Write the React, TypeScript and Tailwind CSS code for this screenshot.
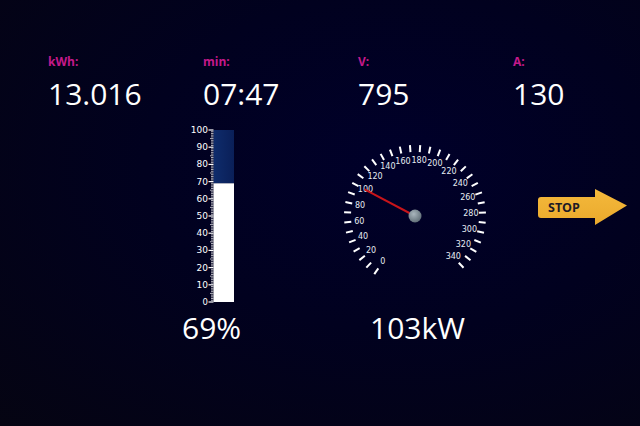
import React from "react";

const stats = [
  { label: "kWh:", value: "13.016" },
  { label: "min:", value: "07:47" },
  { label: "V:", value: "795" },
  { label: "A:", value: "130" },
];

function LevelBar({ percent }: { percent: number }) {
  const top = 10;
  const bottom = 182;
  const y = (v: number) => bottom - ((bottom - top) * v) / 100;
  const ticks = [];
  for (let v = 0; v <= 100; v++) {
    const major = v % 10 === 0;
    const mid = v % 5 === 0;
    ticks.push(
      <line
        key={v}
        x1={major ? 28.5 : mid ? 30 : 31}
        x2={33.5}
        y1={y(v)}
        y2={y(v)}
        stroke="#ffffff"
        strokeWidth={major ? 1.2 : 0.7}
      />
    );
    if (major) {
      ticks.push(
        <text
          key={"l" + v}
          x={28}
          y={y(v)}
          textAnchor="end"
          dominantBaseline="central"
          fill="#ffffff"
          fontSize={v === 0 ? "8.5" : "9"}
          fontFamily="DejaVu Sans, sans-serif"
        >
          {v}
        </text>
      );
    }
  }
  return (
    <svg width="60" height="188" viewBox="0 0 60 188" className="ml-[180px] shrink-0">
      <defs>
        <linearGradient id="barTop" x1="0" y1="0" x2="1" y2="0">
          <stop offset="0" stopColor="#0f2c6c" />
          <stop offset="1" stopColor="#0a1f58" />
        </linearGradient>
      </defs>
      <rect x="33.5" y={top} width="20.5" height={y(percent) - top} fill="url(#barTop)" />
      <rect x="33.5" y={y(percent)} width="20.5" height={bottom - y(percent)} fill="#ffffff" />
      {ticks}
    </svg>
  );
}

function Speedometer({ value }: { value: number }) {
  const cx = 75;
  const cy = 75;
  const ang = (v: number) => ((235 - v * 0.829) * Math.PI) / 180;
  const items = [];
  for (let v = 0; v <= 340; v += 10) {
    const a = ang(v);
    items.push(
      <line
        key={v}
        x1={cx + 64 * Math.cos(a)}
        y1={cy - 64 * Math.sin(a)}
        x2={cx + 71 * Math.cos(a)}
        y2={cy - 71 * Math.sin(a)}
        stroke="#ffffff"
        strokeWidth="2"
      />
    );
    if (v % 20 === 0) {
      items.push(
        <text
          key={"t" + v}
          x={cx + 56 * Math.cos(a)}
          y={cy - 56 * Math.sin(a)}
          textAnchor="middle"
          dominantBaseline="central"
          fill="#e6ecf2"
          fontSize="8"
          fontFamily="DejaVu Sans, sans-serif"
        >
          {v}
        </text>
      );
    }
  }
  const na = ang(value);
  return (
    <svg width="150" height="150" viewBox="0 0 150 150" className="ml-[100px] mt-[21px] shrink-0">
      <defs>
        <radialGradient id="hub" cx="0.4" cy="0.35" r="0.7">
          <stop offset="0" stopColor="#a9b6bd" />
          <stop offset="1" stopColor="#5d6b74" />
        </radialGradient>
      </defs>
      {items}
      <line
        x1={cx}
        y1={cy}
        x2={cx + 57 * Math.cos(na)}
        y2={cy - 57 * Math.sin(na)}
        stroke="#c8141a"
        strokeWidth="2"
      />
      <circle cx={cx} cy={cy} r="6.5" fill="url(#hub)" />
    </svg>
  );
}

function StopArrow() {
  return (
    <svg width="94" height="42" viewBox="0 0 94 42" className="ml-[46px] mt-[66px] shrink-0">
      <defs>
        <linearGradient id="arrow" x1="0" y1="0" x2="0" y2="1">
          <stop offset="0" stopColor="#f4b93c" />
          <stop offset="1" stopColor="#eaa92c" />
        </linearGradient>
      </defs>
      <path
        d="M5 11 H59 V3 L91 19.5 L59 39 V32 H5 Q2 32 2 29 V14 Q2 11 5 11 Z"
        fill="url(#arrow)"
      />
      <text
        x="12"
        y="21.5"
        dominantBaseline="central"
        fill="#1c1a26"
        fontSize="12.5"
        fontWeight="700"
        fontFamily="Open Sans, sans-serif"
      >
        STOP
      </text>
    </svg>
  );
}

export default function App() {
  return (
    <div
      className="w-[640px] h-[426px] overflow-hidden bg-[radial-gradient(ellipse_at_62%_38%,#00002a_0%,#01011f_45%,#050412_100%)] text-white"
      style={{ fontFamily: '"Open Sans", sans-serif' }}
    >
      <div className="flex pt-[56px] pl-[48px]">
        {stats.map((s) => (
          <div key={s.label} className="w-[155px] shrink-0">
            <div className="text-[12px] leading-none font-bold text-[#c4198a]">{s.label}</div>
            <div className="mt-[11px] text-[30px] leading-none text-white">{s.value}</div>
          </div>
        ))}
      </div>
      <div className="flex items-start mt-[11px] h-[188px]">
        <LevelBar percent={69} />
        <Speedometer value={100} />
        <StopArrow />
      </div>
      <div className="flex mt-[5px] text-[30px] leading-none">
        <div className="ml-[182px] w-[188px]">69%</div>
        <div>103kW</div>
      </div>
    </div>
  );
}
